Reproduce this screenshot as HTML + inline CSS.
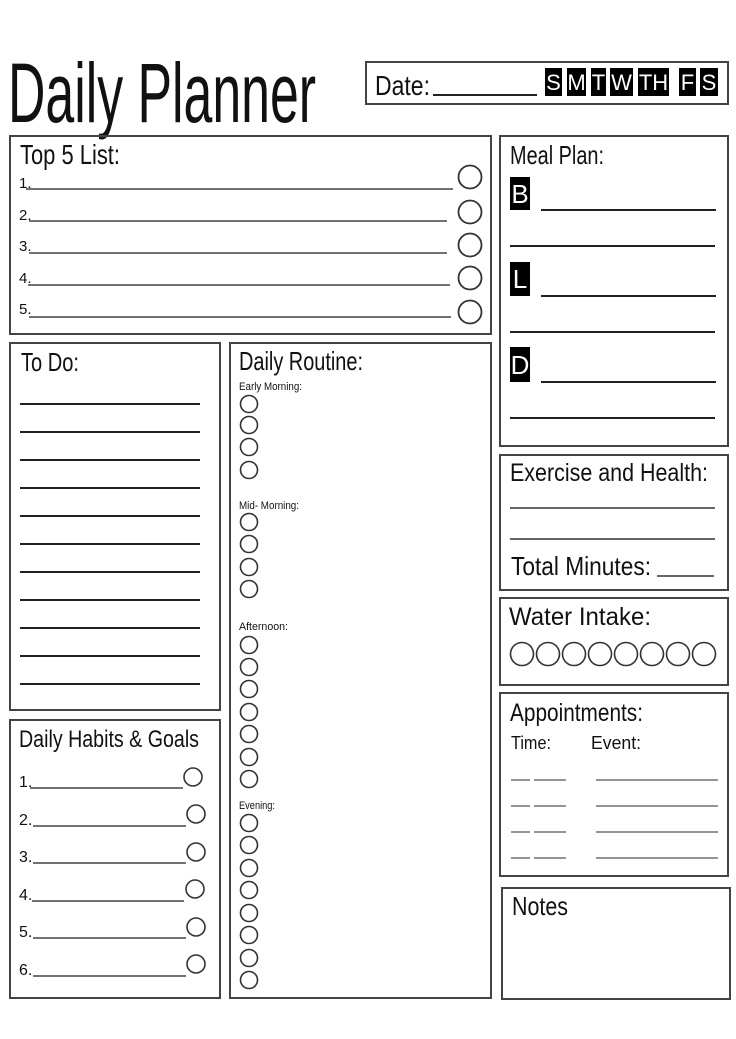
<!DOCTYPE html>
<html><head><meta charset="utf-8"><style>
html,body{margin:0;padding:0;background:#fff;}
svg{display:block;}
text{font-family:"Liberation Sans Narrow","Liberation Sans",sans-serif;fill:#111;}
</style></head><body>
<svg width="736" height="1039" viewBox="0 0 736 1039" xmlns="http://www.w3.org/2000/svg">
<rect width="736" height="1039" fill="#fff"/>
<text x="8" y="122" font-size="84" textLength="308" lengthAdjust="spacingAndGlyphs">Daily Planner</text>
<g fill="none" stroke="#444" stroke-width="2">
<rect x="366" y="62" width="362" height="42"/>
<rect x="10" y="136" width="481" height="198"/>
<rect x="500" y="136" width="228" height="310"/>
<rect x="10" y="343" width="210" height="367"/>
<rect x="230" y="343" width="261" height="655"/>
<rect x="10" y="720" width="210" height="278"/>
<rect x="500" y="455" width="228" height="135"/>
<rect x="500" y="598" width="228" height="87"/>
<rect x="500" y="693" width="228" height="183"/>
<rect x="502" y="888" width="228" height="111"/>
</g>
<text x="375" y="95" font-size="28" textLength="55" lengthAdjust="spacingAndGlyphs">Date:</text>
<line x1="433" y1="95" x2="537" y2="95" stroke="#222" stroke-width="2"/>
<g fill="#000">
<rect x="545" y="68" width="17" height="28"/><rect x="567" y="68" width="19" height="28"/><rect x="591" y="68" width="15" height="28"/><rect x="610" y="68" width="23" height="28"/><rect x="638" y="68" width="31" height="28"/><rect x="679" y="68" width="17" height="28"/><rect x="700" y="68" width="18" height="28"/>
</g>
<g font-size="22" text-anchor="middle" style="fill:#fff">
<text x="553.5" y="90" style="fill:#fff">S</text><text x="576.5" y="90" style="fill:#fff">M</text><text x="598.5" y="90" style="fill:#fff">T</text><text x="621.5" y="90" style="fill:#fff">W</text><text x="653.5" y="90" style="fill:#fff">TH</text><text x="687.5" y="90" style="fill:#fff">F</text><text x="709" y="90" style="fill:#fff">S</text>
</g>
<text x="20" y="164" font-size="28" textLength="100" lengthAdjust="spacingAndGlyphs">Top 5 List:</text>
<g font-size="15">
<text x="19" y="188">1.</text><text x="19" y="220">2.</text><text x="19" y="251">3.</text><text x="19" y="283">4.</text><text x="19" y="314">5.</text>
</g>
<g stroke="#444" stroke-width="1.5">
<line x1="26" y1="189" x2="453" y2="189"/><line x1="29" y1="221" x2="447" y2="221"/><line x1="29" y1="253" x2="447" y2="253"/><line x1="28" y1="285" x2="450" y2="285"/><line x1="29" y1="317" x2="451" y2="317"/>
</g>
<g fill="none" stroke="#333" stroke-width="1.8">
<circle cx="470" cy="177" r="11.5"/><circle cx="470" cy="212" r="11.5"/><circle cx="470" cy="245" r="11.5"/><circle cx="470" cy="278" r="11.5"/><circle cx="470" cy="312" r="11.5"/>
</g>
<text x="510" y="164" font-size="26" textLength="94" lengthAdjust="spacingAndGlyphs">Meal Plan:</text>
<rect x="510" y="177" width="20" height="33" fill="#000"/><rect x="510" y="262" width="20" height="34" fill="#000"/><rect x="510" y="347" width="20" height="35" fill="#000"/>
<g font-size="26" text-anchor="middle"><text x="520" y="203" style="fill:#fff">B</text><text x="520" y="288" style="fill:#fff">L</text><text x="520" y="374" style="fill:#fff">D</text></g>
<g stroke="#222" stroke-width="2">
<line x1="541" y1="210" x2="716" y2="210"/><line x1="510" y1="246" x2="715" y2="246"/><line x1="541" y1="296" x2="716" y2="296"/><line x1="510" y1="332" x2="715" y2="332"/><line x1="541" y1="382" x2="716" y2="382"/><line x1="510" y1="418" x2="715" y2="418"/>
</g>
<text x="21" y="371" font-size="26" textLength="58" lengthAdjust="spacingAndGlyphs">To Do:</text>
<g stroke="#222" stroke-width="2">
<line x1="20" y1="404" x2="200" y2="404"/><line x1="20" y1="432" x2="200" y2="432"/><line x1="20" y1="460" x2="200" y2="460"/><line x1="20" y1="488" x2="200" y2="488"/><line x1="20" y1="516" x2="200" y2="516"/><line x1="20" y1="544" x2="200" y2="544"/><line x1="20" y1="572" x2="200" y2="572"/><line x1="20" y1="600" x2="200" y2="600"/><line x1="20" y1="628" x2="200" y2="628"/><line x1="20" y1="656" x2="200" y2="656"/><line x1="20" y1="684" x2="200" y2="684"/>
</g>
<text x="239" y="370" font-size="26" textLength="124" lengthAdjust="spacingAndGlyphs">Daily Routine:</text>
<g font-size="11">
<text x="239" y="390" textLength="63" lengthAdjust="spacingAndGlyphs">Early Morning:</text>
<text x="239" y="509" textLength="60" lengthAdjust="spacingAndGlyphs">Mid- Morning:</text>
<text x="239" y="630" textLength="49" lengthAdjust="spacingAndGlyphs">Afternoon:</text>
<text x="239" y="809" textLength="36" lengthAdjust="spacingAndGlyphs">Evening:</text>
</g>
<g fill="none" stroke="#333" stroke-width="1.6">
<circle cx="249" cy="404" r="8.5"/><circle cx="249" cy="425" r="8.5"/><circle cx="249" cy="447" r="8.5"/><circle cx="249" cy="470" r="8.5"/>
<circle cx="249" cy="522" r="8.5"/><circle cx="249" cy="544" r="8.5"/><circle cx="249" cy="567" r="8.5"/><circle cx="249" cy="589" r="8.5"/>
<circle cx="249" cy="645" r="8.5"/><circle cx="249" cy="667" r="8.5"/><circle cx="249" cy="689" r="8.5"/><circle cx="249" cy="712" r="8.5"/><circle cx="249" cy="734" r="8.5"/><circle cx="249" cy="757" r="8.5"/><circle cx="249" cy="779" r="8.5"/>
<circle cx="249" cy="823" r="8.5"/><circle cx="249" cy="845" r="8.5"/><circle cx="249" cy="868" r="8.5"/><circle cx="249" cy="890" r="8.5"/><circle cx="249" cy="913" r="8.5"/><circle cx="249" cy="935" r="8.5"/><circle cx="249" cy="958" r="8.5"/><circle cx="249" cy="980" r="8.5"/>
</g>
<text x="19" y="747" font-size="24" textLength="180" lengthAdjust="spacingAndGlyphs">Daily Habits &amp; Goals</text>
<g font-size="16">
<text x="19" y="787">1.</text><text x="19" y="825">2.</text><text x="19" y="862">3.</text><text x="19" y="900">4.</text><text x="19" y="937">5.</text><text x="19" y="975">6.</text>
</g>
<g stroke="#444" stroke-width="1.5">
<line x1="30" y1="788" x2="183" y2="788"/><line x1="33" y1="826" x2="186" y2="826"/><line x1="33" y1="863" x2="186" y2="863"/><line x1="32" y1="901" x2="184" y2="901"/><line x1="33" y1="938" x2="186" y2="938"/><line x1="33" y1="976" x2="186" y2="976"/>
</g>
<g fill="none" stroke="#333" stroke-width="1.6">
<circle cx="193" cy="777" r="9"/><circle cx="196" cy="814" r="9"/><circle cx="196" cy="852" r="9"/><circle cx="195" cy="889" r="9"/><circle cx="196" cy="927" r="9"/><circle cx="196" cy="964" r="9"/>
</g>
<text x="510" y="481" font-size="25" textLength="198" lengthAdjust="spacingAndGlyphs">Exercise and Health:</text>
<g stroke="#333" stroke-width="1.6"><line x1="510" y1="508" x2="715" y2="508"/><line x1="510" y1="539" x2="715" y2="539"/><line x1="657" y1="576" x2="714" y2="576"/></g>
<text x="511" y="575" font-size="26" textLength="140" lengthAdjust="spacingAndGlyphs">Total Minutes:</text>
<text x="509" y="625" font-size="25" textLength="142" lengthAdjust="spacingAndGlyphs">Water Intake:</text>
<g fill="none" stroke="#333" stroke-width="1.6">
<circle cx="522" cy="654" r="11.5"/><circle cx="548" cy="654" r="11.5"/><circle cx="574" cy="654" r="11.5"/><circle cx="600" cy="654" r="11.5"/><circle cx="626" cy="654" r="11.5"/><circle cx="652" cy="654" r="11.5"/><circle cx="678" cy="654" r="11.5"/><circle cx="704" cy="654" r="11.5"/>
</g>
<text x="510" y="721" font-size="25" textLength="133" lengthAdjust="spacingAndGlyphs">Appointments:</text>
<text x="511" y="749" font-size="18" textLength="40" lengthAdjust="spacingAndGlyphs">Time:</text>
<text x="591" y="749" font-size="18" textLength="50" lengthAdjust="spacingAndGlyphs">Event:</text>
<g stroke="#555" stroke-width="1.3">
<line x1="511" y1="780" x2="530" y2="780"/><line x1="534" y1="780" x2="566" y2="780"/><line x1="596" y1="780" x2="718" y2="780"/>
<line x1="511" y1="806" x2="530" y2="806"/><line x1="534" y1="806" x2="566" y2="806"/><line x1="596" y1="806" x2="718" y2="806"/>
<line x1="511" y1="832" x2="530" y2="832"/><line x1="534" y1="832" x2="566" y2="832"/><line x1="596" y1="832" x2="718" y2="832"/>
<line x1="511" y1="858" x2="530" y2="858"/><line x1="534" y1="858" x2="566" y2="858"/><line x1="596" y1="858" x2="718" y2="858"/>
</g>
<text x="512" y="915" font-size="26" textLength="56" lengthAdjust="spacingAndGlyphs">Notes</text>
</svg>
</body></html>
